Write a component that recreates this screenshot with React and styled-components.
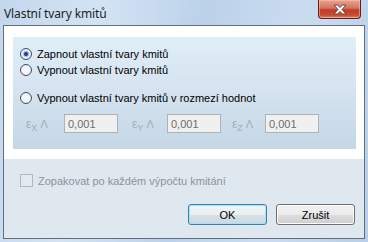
import React from "react";
import styled, { createGlobalStyle } from "styled-components";

const Global = createGlobalStyle`
  html, body { margin: 0; padding: 0; }
  body { width: 368px; height: 242px; overflow: hidden; font-family: "Liberation Sans", Arial, sans-serif; }
`;

const Window = styled.div`
  width: 368px;
  height: 242px;
  box-sizing: border-box;
  display: flex;
  flex-direction: column;
  padding: 0 3px 3px 3px;
  background: linear-gradient(100deg, #c3d7ed 0%, #d3e3f4 25%, #bcd2ea 50%, #cadcf0 75%, #b8cfe8 100%);
`;

const TitleBar = styled.div`
  height: 25px;
  display: flex;
  align-items: flex-start;
  justify-content: space-between;
`;

const Title = styled.span`
  font-family: "Noto Sans", "Open Sans", sans-serif;
  font-size: 12px;
  color: #1e1e1e;
  margin: 5px 0 0 1px;
  letter-spacing: -0.1px;
`;

const CloseButton = styled.div`
  width: 43px;
  height: 19px;
  margin-right: 4px;
  box-sizing: border-box;
  border: 1px solid #6a1d14;
  border-top: none;
  border-radius: 0 0 4px 4px;
  background: linear-gradient(180deg, #e8a493 0%, #d2735f 45%, #c23c25 55%, #c94c33 85%, #e0896f 100%);
  box-shadow: inset 0 0 0 1px rgba(255, 200, 180, 0.5);
  display: flex;
  align-items: center;
  justify-content: center;
`;

const Client = styled.div`
  flex: 1;
  display: flex;
  flex-direction: column;
  border: 1px solid #646e7a;
  background: #dfe7ef;
`;

const WhitePanel = styled.div`
  background: #ffffff;
  padding: 11px 8px 10px 9px;
`;

const Group = styled.div`
  height: 112px;
  box-sizing: border-box;
  background: linear-gradient(180deg, #e0eef8 0%, #d5e4f0 45%, #c5d6e6 100%);
  padding: 9px 0 0 7px;
  display: flex;
  flex-direction: column;
`;

const OptionRow = styled.label`
  display: flex;
  align-items: center;
  height: 16px;
  margin-top: ${(p) => p.$gap || 0}px;
  font-size: 11px;
  color: #000;
  gap: 5px;
`;

const Radio = styled.span`
  width: 12px;
  height: 12px;
  box-sizing: border-box;
  border-radius: 50%;
  border: 1px solid #3a4f66;
  background: radial-gradient(circle at 50% 50%, #ffffff 0%, #f3f6f9 50%, #dde4ec 100%);
  display: flex;
  align-items: center;
  justify-content: center;
  &::after {
    content: "";
    width: 4px;
    height: 4px;
    border-radius: 50%;
    background: ${(p) => (p.$checked ? "#1a3d9c" : "transparent")};
    box-shadow: ${(p) => (p.$checked ? "0 0 1px 1px rgba(60,110,200,0.5)" : "none")};
  }
`;

const FieldRow = styled.div`
  display: flex;
  align-items: center;
  margin-top: 8px;
  padding-left: 6px;
`;

const Field = styled.div`
  display: flex;
  align-items: center;
  margin-right: ${(p) => p.$mr || 0}px;
`;

const Eps = styled.span`
  width: ${(p) => p.$w}px;
  color: #a7acb2;
  font-size: 12px;
  display: flex;
  align-items: baseline;
  sub {
    font-size: 9px;
    vertical-align: baseline;
    position: relative;
    top: 3px;
  }
  span {
    margin-left: 3px;
    font-size: 11px;
  }
`;

const Input = styled.div`
  width: 54px;
  height: 19px;
  box-sizing: border-box;
  border: 1px solid #adb2b5;
  background: #f0f0f0;
  color: #6d6d6d;
  font-size: 11px;
  padding: 3px 0 0 3px;
`;

const Footer = styled.div`
  flex: 1;
  display: flex;
  flex-direction: column;
  padding: 15px 9px 0 16px;
`;

const CheckRow = styled.div`
  display: flex;
  align-items: center;
  gap: 5px;
  font-size: 11px;
  color: #8d939a;
`;

const CheckBox = styled.span`
  width: 13px;
  height: 13px;
  box-sizing: border-box;
  border: 1px solid #b3b8bd;
  background: #e4e9ee;
`;

const Buttons = styled.div`
  display: flex;
  justify-content: flex-end;
  gap: 9px;
  margin-top: 17px;
`;

const Button = styled.div`
  width: 79px;
  height: 21px;
  box-sizing: border-box;
  border: 1px solid ${(p) => (p.$default ? "#3c7fb1" : "#707070")};
  border-radius: 3px;
  background: ${(p) =>
    p.$default
      ? "linear-gradient(180deg, #f1f5f8 0%, #e8eef2 50%, #d8e0e6 51%, #cfd8df 100%)"
      : "linear-gradient(180deg, #f2f2f2 0%, #ebebeb 50%, #dddddd 51%, #cfcfcf 100%)"};
  box-shadow: inset 0 0 0 1px ${(p) => (p.$default ? "#a8e0f8" : "#fcfcfc")};
  font-size: 11px;
  color: #000;
  display: flex;
  align-items: center;
  justify-content: center;
`;

const fields = [
  { axis: "X", w: 38, mr: 14 },
  { axis: "Y", w: 35, mr: 11 },
  { axis: "Z", w: 33, mr: 0 },
];

export default function App() {
  return (
    <>
      <Global />
      <Window>
        <TitleBar>
          <Title>Vlastní tvary kmitů</Title>
          <CloseButton>
            <svg width="14" height="11" viewBox="0 0 14 11">
              <path
                d="M1 1 L4.5 1 L7 3.5 L9.5 1 L13 1 L9 5.5 L13 10 L9.5 10 L7 7.5 L4.5 10 L1 10 L5 5.5 Z"
                fill="#ffffff"
                stroke="#5a3a36"
                strokeWidth="0.9"
                strokeLinejoin="round"
              />
            </svg>
          </CloseButton>
        </TitleBar>
        <Client>
          <WhitePanel>
            <Group>
              <OptionRow>
                <Radio $checked />
                Zapnout vlastní tvary kmitů
              </OptionRow>
              <OptionRow>
                <Radio />
                Vypnout vlastní tvary kmitů
              </OptionRow>
              <OptionRow $gap={12}>
                <Radio />
                Vypnout vlastní tvary kmitů v rozmezí hodnot
              </OptionRow>
              <FieldRow>
                {fields.map((f) => (
                  <Field key={f.axis} $mr={f.mr}>
                    <Eps $w={f.w}>
                      ε<sub>{f.axis}</sub>
                      <span>Λ</span>
                    </Eps>
                    <Input>0,001</Input>
                  </Field>
                ))}
              </FieldRow>
            </Group>
          </WhitePanel>
          <Footer>
            <CheckRow>
              <CheckBox />
              Zopakovat po každém výpočtu kmitání
            </CheckRow>
            <Buttons>
              <Button $default>OK</Button>
              <Button>Zrušit</Button>
            </Buttons>
          </Footer>
        </Client>
      </Window>
    </>
  );
}
